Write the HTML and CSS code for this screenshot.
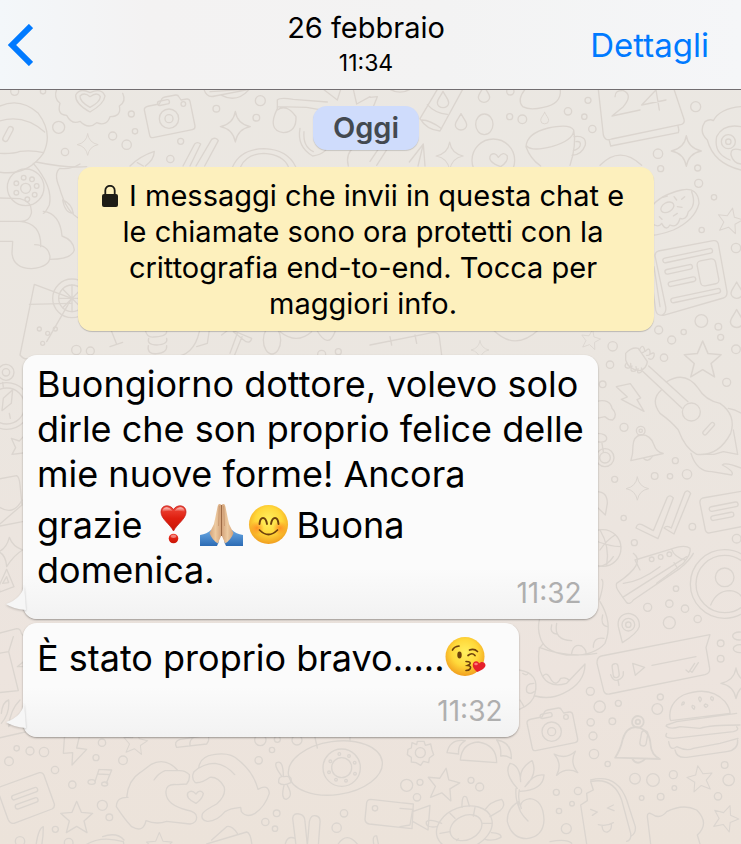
FILE: index.html
```html
<!DOCTYPE html>
<html lang="it">

<head>
    <meta charset="UTF-8">
    <meta name="viewport" content="width=device-width, initial-scale=1.0">
    <title>Chat del 26 febbraio</title>
    <link rel="stylesheet" href="styles.css">
</head>

<body>

    <!-- Sfondo con i disegni -->
    <svg class="wallpaper" viewBox="0 0 2223 2532" preserveAspectRatio="xMidYMin slice" aria-hidden="true">
        <defs>
            <path id="star" d="M0-48 L14-15 L48-12 L22 11 L31 46 L0 27 L-31 46 L-22 11 L-48-12 L-14-15Z" />
            <path id="sparkle" d="M0-46 Q6-8 45 0 Q7 7 0 46 Q-7 7-45 0 Q-6-8 0-46Z" />
            <path id="drop" d="M0-24 C8-8 17 0 17 10 A17 15 0 0 1-17 10 C-17 0-8-8 0-24Z" />
            <g id="camera">
                <path d="M-60-38 L-29-44 L-21-60 Q-18-64-12-65 L20-71 Q27-72 30-65 L36-56 L53-59 Q61-60 63-52 L78 22 Q79 31 70 33 L-48 57 Q-56 58-58 50 L-74-26 Q-75-35-60-38Z" />
                <circle r="29" />
                <circle r="12" />
                <circle cx="43" cy="-44" r="7" />
                <rect x="-25" y="-57" width="36" height="13" rx="6" transform="rotate(-11)" />
            </g>
            <g id="bell">
                <path d="M-39 40 Q-30 22-28-3 Q-24-32 0-34 Q28-32 35 0 Q39 22 60 29 Z" />
                <circle cy="-46" r="13" />
                <circle cy="-46" r="5" />
                <path d="M0 38 Q12 52 27 34" />
            </g>
        </defs>

        <!-- In alto a sinistra -->
        <g>
            <path d="M-4 320 Q60 290 115 340 Q160 400 130 460 Q80 530-4 516 M-4 364 Q70 340 134 396 M-4 460 Q40 462 60 454 Q100 450 130 458" />
            <rect x="-24" y="-8" width="48" height="16" rx="8" transform="translate(24 402) rotate(-62)" />
            <path d="M108 486 Q200 505 260 500 M100 490 Q160 560 148 615 Q135 640 130 640" />
            <circle cx="77" cy="562" r="55" />
            <circle cx="77" cy="565" r="15" />
            <circle cx="71" cy="533" r="7" /><circle cx="96" cy="538" r="7" /><circle cx="110" cy="558" r="7" />
            <circle cx="104" cy="584" r="7" /><circle cx="82" cy="598" r="7" /><circle cx="49" cy="578" r="7" /><circle cx="49" cy="550" r="7" />
            <path d="M-4 594 L60 596 Q98 605 94 640 Q88 665 60 664 L-4 664 M60 664 Q125 670 122 740 M-4 724 L38 724 L36 760 Q40 805 95 806 Q150 800 150 770 Q145 735 104 734 M130 634 Q180 640 186 708 Q220 720 223 750 Q215 778 150 778" />
            <path d="M178 562 Q160 520 180 505 Q210 510 240 492 M178 562 Q200 640 240 656 M188 600 Q215 610 220 640 Q195 640 188 600" />
            <path d="M170 268 Q160 295 180 310 Q170 345 200 346 Q215 375 240 364 Q265 390 290 368 Q320 380 330 350 Q365 350 358 318 Q380 305 368 280" />
            <path d="M270 336 Q225 312 227 285 Q240 262 270 278 Q305 262 315 288 Q312 312 270 336Z M270 322 Q238 304 240 288 Q252 275 270 290 Q292 274 301 290 Q300 306 270 322Z" />
            <use href="#camera" x="507" y="356" />
            <use href="#sparkle" x="706" y="380" />
            <use href="#sparkle" transform="translate(263 434) scale(.7)" />
            <path d="M549 498 L584 432 Q592 424 602 432 L570 498 M588 498 L635 418 Q648 410 655 422 L614 498" />
            <path d="M390 498 Q420 468 463 454 Q462 480 436 498 M412 488 L430 498" />
            <path d="M698 500 Q722 447 792 446 Q862 448 887 500 M722 500 Q740 462 792 460 Q850 464 865 500" />
            <path d="M612 268 Q620 295 645 288 L748 268 M630 275 L740 268 M665 286 Q710 310 748 268" />
            <path d="M832 300 Q840 292 880 298 L982 306 M832 320 L920 322 Q960 330 1000 334 M832 300 L832 326 Q800 390 850 398 Q890 395 888 350 Q860 310 832 330 M900 385 Q890 440 938 468 Q985 462 990 420 M912 395 Q908 440 940 455" />
            <path d="M970 268 L1012 300 L1022 268 M1060 268 L1070 312 L1110 290 M1045 498 Q1035 460 1065 440" />
            <circle cx="44" cy="274" r="12" /><circle cx="129" cy="274" r="8" /><circle cx="176" cy="382" r="18" />
            <circle cx="394" cy="342" r="9" /><circle cx="405" cy="394" r="8" /><circle cx="338" cy="408" r="12" />
            <circle cx="380" cy="434" r="14" /><circle cx="195" cy="456" r="11" /><circle cx="542" cy="424" r="9" />
            <circle cx="511" cy="477" r="11" /><circle cx="649" cy="326" r="10" /><circle cx="769" cy="353" r="10" /><circle cx="781" cy="302" r="15" />
        </g>

        <!-- In alto a destra -->
        <g transform="translate(1110 0)">
            <path d="M202 268 L150 356 Q170 390 210 393 L278 268 M172 314 Q195 340 232 343 M156 360 Q180 360 215 386" />
            <path d="M60 268 Q90 285 120 268 M0 345 L22 290 L0 292 M0 484 L30 440 M20 496 L56 440 M118 486 L160 432 L144 498 M160 432 L165 498" />
            <use href="#drop" x="219" y="298" />
            <use href="#drop" x="342" y="282" />
            <use href="#drop" x="273" y="365" />
            <use href="#drop" transform="translate(524 354) scale(.7)" />
            <use href="#sparkle" transform="translate(239 468) scale(.9)" />
            <use href="#sparkle" x="949" y="453" />
            <ellipse cx="343" cy="373" rx="26" ry="31" />
            <path d="M465 268 Q440 300 458 320 Q480 332 520 322 Q575 312 571 268" />
            <circle cx="370" cy="481" r="64" />
            <path d="M392 500 Q350 485 362 465 Q375 455 385 472 Q400 452 412 468 Q415 485 392 500Z" />
            <path d="M468 440 Q470 400 535 384 Q600 370 611 390 Q620 435 600 496 M468 440 Q480 475 512 498 M470 438 Q485 455 545 440 Q610 420 611 392 M612 410 Q650 405 646 435 Q635 465 606 466 M618 425 Q635 422 630 438 Q625 448 610 452" />
            <path d="M685 268 L700 405 Q705 425 725 417 L935 373 Q945 368 942 358 L912 268 M718 422 L722 438 L925 398 Q928 390 924 378" />
            <path d="M735 290 Q735 270 760 272 Q790 285 760 320 L726 348 L810 330 M860 268 L815 315 L888 300 M858 270 L868 330" />
            <path d="M1012 420 Q985 395 1005 365 Q1020 355 1030 362 Q1050 325 1113 320 M1012 420 Q1030 490 1113 510 M1113 380 Q1060 370 1040 410 Q1030 460 1080 480 M1113 450 Q1080 440 1083 465 Q1090 490 1113 492" />
            <circle cx="1075" cy="425" r="21" /><circle cx="1075" cy="425" r="8" />
            <path d="M690 496 Q750 435 815 496" />
            <circle cx="419" cy="350" r="9" /><circle cx="457" cy="358" r="13" /><circle cx="594" cy="334" r="11" />
            <circle cx="654" cy="301" r="9" /><circle cx="643" cy="350" r="8" /><circle cx="667" cy="387" r="11" />
            <circle cx="421" cy="274" r="11" /><circle cx="977" cy="320" r="15" /><circle cx="864" cy="461" r="14" />
            <circle cx="872" cy="506" r="9" /><circle cx="983" cy="504" r="9" />
        </g>

        <!-- Colonna destra -->
        <g transform="translate(1770 510)">
            <path d="M185 110 Q210 75 275 60 Q325 50 327 100 Q315 150 250 180 Q210 195 185 196 M185 160 Q205 175 215 160 Q228 185 240 165 Q262 175 270 145 Q290 152 295 125 Q320 105 305 65" />
            <ellipse cx="232" cy="112" rx="21" ry="14" transform="rotate(-30 232 112)" />
            <path d="M218 82 L232 78 M252 80 L260 90 M275 88 L284 80 M262 110 L276 112 M250 138 L262 130 M208 140 L216 148" />
            <path d="M370 212 Q382 210 385 222 L411 365 Q412 380 400 384 L220 436 Q200 438 197 420 L180 290 M370 212 L205 243 Q192 248 196 262 L227 410 Q230 430 215 436 M192 290 L210 410" />
            <rect x="-76" y="-7" width="152" height="14" rx="7" transform="translate(293 257) rotate(-12)" />
            <rect x="-42" y="-7" width="84" height="14" rx="7" transform="translate(266 298) rotate(-12)" />
            <rect x="-42" y="-7" width="84" height="14" rx="7" transform="translate(276 335) rotate(-12)" />
            <rect x="-76" y="-7" width="152" height="14" rx="7" transform="translate(317 377) rotate(-12)" />
            <rect x="-28" y="-38" width="56" height="76" rx="12" transform="translate(354 307) rotate(-11)" />
            <use href="#star" transform="translate(420 151) scale(.78) rotate(12)" />
            <use href="#star" transform="translate(338 568) scale(1.15)" />
            <use href="#star" transform="translate(2 508) scale(.6) rotate(12)" />
            <use href="#drop" x="440" y="360" />
            <use href="#drop" transform="translate(440 445) scale(1.1)" />
            <!-- chitarra -->
            <path d="M107 550 Q125 530 145 535 L172 575 Q170 595 150 602 Q115 600 107 570Z M158 604 L276 715 M176 588 L294 695" />
            <path d="M229 636 Q285 600 325 655 Q345 690 390 700 Q440 735 422 790 Q385 860 320 853 Q285 835 265 780 Q245 755 210 730 Q180 690 214 660" />
            <circle cx="304" cy="726" r="27" />
            <rect x="-23" y="-6" width="46" height="12" rx="6" transform="translate(356 776) rotate(-48)" />
            <path d="M148 540 q8-18 14-6 t-6 14 m10-4 q12-14 14 0 t-10 12 m12-4 q14-8 10 6 t-16 8 M110 578 q-10 14 2 16 t10-14 m4 8 q-8 16 4 16 t8-14 m6 6 q-4 16 6 12 t4-14" />
            <path d="M79 650 L121 641 L152 684 L141 689 L162 724 L94 688 L112 681Z" />
            <use href="#bell" transform="translate(157 828) rotate(-6)" />
            <path d="M415 715 Q435 718 455 730 M430 780 L443 853 L400 845 L372 853 L320 853 M303 850 Q320 905 365 905 L425 915 Q435 905 397 885 Q405 875 455 895" />
            <use href="#sparkle" transform="translate(142 956) scale(.75)" />
            <path d="M138 1074 Q142 1058 156 1064 L190 1082 L232 982 Q240 972 250 984 L204 1106Z M222 1074 Q230 1064 244 1074 L284 968 Q292 956 302 970 L252 1092Z" />
            <path d="M455 964 L338 984 Q328 988 330 1000 L346 1080 Q350 1092 362 1088 L455 1070" />
            <rect x="-44" y="-7" width="88" height="14" rx="7" transform="translate(401 1010) rotate(-11)" />
            <rect x="-35" y="-7" width="70" height="14" rx="7" transform="translate(397 1039) rotate(-11)" />
            <path d="M20 694 Q60 685 66 715 Q85 735 68 750 Q55 750 45 740 L20 745 M20 790 Q52 790 50 808 Q45 820 20 815 M36 820 L40 845" />
            <circle cx="45" cy="863" r="27" /><circle cx="45" cy="863" r="16" />
            <path d="M20 965 Q52 965 52 1000 L46 1035 L20 1010" />
            <circle cx="38" cy="1134" r="55" />
            <path d="M30 1080 Q60 1130 50 1185 M10 1110 Q60 1130 92 1130 M30 1140 Q50 1110 75 1095" />
            <circle cx="404" cy="1242" r="103" /><circle cx="404" cy="1242" r="86" /><circle cx="404" cy="1222" r="28" />
            <path d="M362 1305 Q380 1262 420 1262 Q450 1264 460 1290" />
            <path d="M135 1170 L240 1138 Q285 1122 300 1135 Q305 1150 280 1180 L200 1240 M135 1170 L150 1200 M245 1138 Q252 1160 285 1170" />
            <circle cx="185" cy="1168" r="7" /><circle cx="212" cy="1161" r="7" /><circle cx="238" cy="1153" r="7" />
            <circle cx="326" cy="40" r="12" /><circle cx="372" cy="82" r="8" /><circle cx="335" cy="180" r="8" />
            <circle cx="438" cy="234" r="14" /><circle cx="334" cy="453" r="19" /><circle cx="385" cy="470" r="10" />
            <circle cx="281" cy="486" r="8" /><circle cx="245" cy="510" r="12" /><circle cx="206" cy="480" r="12" />
            <circle cx="392" cy="502" r="9" /><circle cx="438" cy="538" r="13" /><circle cx="222" cy="563" r="11" />
            <circle cx="68" cy="529" r="14" /><circle cx="60" cy="584" r="11" /><circle cx="38" cy="643" r="10" />
            <circle cx="410" cy="637" r="12" /><circle cx="102" cy="772" r="12" /><circle cx="256" cy="872" r="9" />
            <circle cx="291" cy="913" r="14" /><circle cx="240" cy="919" r="8" /><circle cx="194" cy="918" r="10" />
            <circle cx="74" cy="928" r="9" /><circle cx="101" cy="1044" r="8" /><circle cx="307" cy="1070" r="10" />
            <circle cx="440" cy="1106" r="13" /><circle cx="133" cy="1118" r="9" />
        </g>

        <!-- Tra avviso e primo messaggio -->
        <g transform="translate(0 975)">
            <path d="M60 90 L103-122 L215-80 L140 50 M88-62 L215-65 M60 90 Q75 110 100 96" />
            <circle cx="216" cy="-80" r="58" /><circle cx="216" cy="-80" r="40" />
            <path d="M216-120 V-40 M176-80 H256 M188-108 L244-52 M244-108 L188-52" />
            <circle cx="118" cy="12" r="6" /><circle cx="143" cy="25" r="6" /><circle cx="166" cy="12" r="6" /><circle cx="128" cy="55" r="6" />
            <circle cx="229" cy="75" r="14" /><circle cx="271" cy="78" r="12" />
            <path d="M332 12 L350 58 M330 65 L368 52 M436 15 Q440 38 460 36 Q500 34 500 20 M446 40 Q440 60 470 60 Q505 58 500 40 M445 62 Q440 88 470 86 Q502 84 500 62 M510 95 Q580 100 598 20 M590 65 L622 55 L628 15" />
            <path d="M665 30 L688 12 L755 40 Q752 55 738 50 L700 20 M690 85 L712 25 M704 90 L726 35" />
            <ellipse cx="816" cy="45" rx="26" ry="42" />
            <path d="M840 20 Q890 60 935 20 M950 15 Q985 75 1005 20" />
            <circle cx="965" cy="88" r="12" /><circle cx="1015" cy="80" r="9" />
            <path d="M1110 60 L1300 22 Q1316 22 1318 36 L1325 90 M1170 35 L1175 60 M1245 30 L1250 55 M1480 15 Q1545 80 1615 15" />
            <use href="#sparkle" transform="translate(1440 75) scale(.6)" />
            <!-- bussola -->
            <circle cx="20" cy="243" r="54" /><circle cx="20" cy="243" r="70" /><circle cx="18" cy="142" r="24" /><circle cx="18" cy="142" r="11" />
            <path d="M38 194 L34 235 L6 257 L10 220Z M8 172 L10 186 M28 265 L31 280" />
            <path d="M70 335 L58 348 L34 340 L47 368 L36 388 L70 384 M-4 462 L50 452 Q58 456 60 480 L66 540 L-4 600" />
        </g>

        <!-- Colonna sinistra in basso -->
        <g transform="translate(0 1440)">
            <path d="M-4 80 Q40 110 66 60 M0 138 L68 125 M28 172 Q38 200 68 210 Q42 225 20 260 Q18 225 -4 215 Q20 205 28 172Z M-4 320 L20 268 L42 320 L0 336Z M8 310 L20 290 L26 308Z" />
            <path d="M-4 460 L50 446 Q62 446 64 460 L80 480 M-4 520 L26 515 L55 632 L-4 638 M26 515 L40 470 M52 560 L70 545 L70 560Z M4 700 Q8 665 26 660 Q30 700 4 730 M60 660 Q30 690 26 740 L60 700" />
        </g>

        <!-- In basso a sinistra -->
        <g transform="translate(0 2190)">
            <path d="M-4 24 L76 6 M195 0 L190 70 L218 68 L216 105 L260 58 L230 54 L238 20" />
            <path d="M-4 172 L118 128 Q128 126 132 136 L163 222 Q165 232 156 237 L42 280 Q30 282 24 268 L-4 190" />
            <rect x="-41" y="-7" width="82" height="14" rx="7" transform="translate(74 191) rotate(-20)" />
            <rect x="-36" y="-7" width="72" height="14" rx="7" transform="translate(80 220) rotate(-20)" />
            <path d="M297 118 L335 120 L319 160 M297 118 L285 155 M294 132 L330 134" />
            <ellipse cx="275" cy="156" rx="11" ry="7" /><ellipse cx="314" cy="162" rx="9" ry="6" />
            <use href="#star" transform="translate(230 262)" />
            <use href="#star" transform="translate(406 36) scale(.75) rotate(8)" />
            <use href="#star" transform="translate(478 346) scale(.8)" />
            <path d="M530 52 L620 42 Q630 30 624 16 M530 52 Q520 35 540 28 L624 16 M570 46 Q568 30 580 24" />
            <!-- mani a cuore -->
            <path d="M384 202 Q350 200 349 230 Q375 270 395 290 Q430 310 438 272 Q470 285 500 274 L570 282 Q590 280 590 262 Q590 245 560 240 Q500 225 498 190 Q495 160 530 164 L560 162 Q570 150 568 134 Q555 120 535 122 L495 122 Q475 130 462 150 M380 202 Q385 150 420 128 L452 104 Q495 80 532 120" />
            <path d="M596 114 Q600 80 640 74 Q690 65 715 90 Q760 125 774 178 Q805 160 808 190 Q795 230 765 250 Q740 265 724 245 L722 232 Q690 235 675 245 Q650 275 622 274 Q600 270 608 250 Q615 240 650 222 Q680 195 672 170 Q655 140 630 142 Q605 160 586 158 Q572 145 582 125 Q610 100 645 100 Q680 105 704 134" />
            <path d="M588 220 Q555 205 564 188 Q575 178 588 192 Q600 176 610 190 Q608 206 588 220Z" />
            <ellipse cx="1006" cy="114" rx="142" ry="80" transform="rotate(-8 1006 114)" />
            <circle cx="1025" cy="113" r="56" /><circle cx="1025" cy="113" r="30" />
            <circle cx="1018" cy="72" r="4" /><circle cx="1047" cy="78" r="4" /><circle cx="1064" cy="98" r="4" /><circle cx="1065" cy="131" r="4" />
            <circle cx="1038" cy="152" r="4" /><circle cx="1008" cy="149" r="4" /><circle cx="987" cy="127" r="4" /><circle cx="991" cy="94" r="4" />
            <path d="M846 140 Q820 105 830 98 Q850 88 850 140 Q880 135 872 158 Q850 170 836 158 Q835 140 846 140 M852 166 Q842 205 858 208 Q882 200 862 166" />
            <path d="M255 346 Q300 315 370 335 L372 346 M308 320 Q350 305 372 330 M620 342 L740 306 Q752 308 756 346 M635 330 L680 290 Q695 285 712 310 M108 346 Q115 295 130 290 Q130 320 125 346" />
            <path d="M888 346 L878 265 Q880 248 898 252 Q915 255 915 275 L922 346 L928 275 Q932 252 950 258 Q962 262 960 278 L955 346 M855 346 Q860 315 885 325 M1012 346 Q1040 300 1075 346 M1122 346 Q1115 315 1130 318 L1136 346" />
            <path d="M1200 218 L1112 208 Q1102 208 1100 218 L1095 268 Q1096 280 1108 282 L1200 292 M1200 218 L1240 222 L1236 296 L1200 292 M1240 244 L1290 226 L1284 300 L1238 274" />
            <circle cx="1125" cy="235" r="8" />
            <path d="M940 0 L952 54 M1050 0 V34" />
            <circle cx="27" cy="94" r="13" /><circle cx="50" cy="55" r="8" /><circle cx="90" cy="63" r="12" /><circle cx="132" cy="66" r="14" />
            <circle cx="165" cy="120" r="11" /><circle cx="217" cy="164" r="11" /><circle cx="306" cy="38" r="11" /><circle cx="288" cy="83" r="9" />
            <circle cx="369" cy="91" r="13" /><circle cx="307" cy="226" r="15" /><circle cx="328" cy="262" r="10" /><circle cx="166" cy="298" r="9" />
            <circle cx="60" cy="334" r="14" /><circle cx="206" cy="338" r="13" /><circle cx="776" cy="91" r="11" /><circle cx="816" cy="60" r="8" />
            <circle cx="781" cy="30" r="17" /><circle cx="891" cy="30" r="15" /><circle cx="832" cy="28" r="9" /><circle cx="830" cy="250" r="10" />
            <circle cx="796" cy="276" r="11" /><circle cx="825" cy="296" r="8" /><circle cx="1032" cy="250" r="11" /><circle cx="1010" cy="293" r="14" />
        </g>

        <!-- In basso a destra -->
        <g transform="translate(1200 1680)">
            <path d="M597 20 Q625 15 640 -10 M700 -20 Q740 10 650 70 Q645 80 660 100 L680 128 Q690 135 700 120 L840 25 Q870 0 880 -20 M668 112 L860 -10 M670 70 Q720 65 780 20 M822 8 L832 24" />
            <path d="M605 58 Q615 65 598 120 M600 125 Q640 190 615 250 Q580 290 500 285 Q430 275 420 230 Q412 205 418 180 M455 195 Q448 220 470 222 M470 190 Q460 240 515 242 M418 262 Q500 295 590 280 M418 262 Q410 320 428 350 Q450 385 500 370 L555 312 Q555 370 490 400 Q450 420 405 408 M430 250 L418 265 M428 350 Q440 330 455 362 Q470 380 482 355 Q500 350 508 362 M515 280 Q520 250 545 258 Q560 270 558 282 M580 262 Q580 230 612 235 M622 200 Q600 195 608 165 M358 330 Q420 340 405 400 Q400 430 358 448 M368 340 Q380 350 385 338 M402 370 Q375 370 380 395 Q390 405 402 395 M360 420 L372 440" />
            <path d="M667 248 L655 200 Q650 165 685 160 Q720 165 718 200 Q712 220 667 248Z" />
            <circle cx="685" cy="194" r="19" /><circle cx="685" cy="194" r="8" />
            <!-- messaggio vocale -->
            <path d="M604 288 L930 224 L918 262 L929 325 Q930 340 915 344 L628 402 Q615 404 611 392 L591 310 Q590 292 604 288Z" />
            <path d="M698 310 L734 322 L706 346Z M756 316 L888 290 M858 330 L866 337 L884 310 M870 332 L876 337 L895 308 M632 344 Q640 365 654 360 Q672 355 670 335 M654 361 L657 376" />
            <rect x="638" y="311" width="18" height="42" rx="9" transform="rotate(-8 647 332)" />
            <use href="#camera" x="455" y="515" />
            <use href="#bell" transform="translate(705 547) rotate(8) scale(1.35)" />
            <rect x="722" y="512" width="19" height="46" rx="9" transform="rotate(10 731 535)" />
            <!-- hamburger -->
            <path d="M810 475 Q805 430 850 405 Q930 375 975 425 Q990 445 990 460 L812 482Z M800 495 L830 485 L1010 460 M798 498 Q810 510 840 500 L900 505 Q930 495 1020 495 M800 520 Q790 535 820 535 L1000 515 Q1020 510 1010 500 M806 545 Q810 575 830 560 Q860 575 880 565 L960 550 L1014 535 M825 570 Q830 595 860 592 L980 575 Q1015 570 1013 540" />
            <path d="M845 435 q2-12 8-8 q0 8-8 8 M900 425 q-8-12 0-14 q8 6 0 14 M938 422 q-10-6-4-12 q10 2 4 12 M882 448 q-10-8-4-12 q10 2 4 12 M918 442 q-10-6-2-10 q14 4 2 10" />
            <use href="#sparkle" transform="translate(1008 370)" />
            <use href="#sparkle" transform="translate(498 610) rotate(38)" />
            <ellipse cx="1018" cy="228" rx="20" ry="12" /><ellipse cx="1020" cy="266" rx="20" ry="12" />
            <!-- ingranaggio -->
            <circle cx="61" cy="578" r="15" />
            <path d="M52 544 L72 544 L76 556 L92 552 L96 570 L101 584 L88 594 L86 608 L70 604 L62 616 L48 608 L34 606 L34 592 L22 584 L24 568 L34 564 L36 548 L50 554Z" />
            <path d="M181 600 Q185 550 235 546 Q290 555 290 608Z M141 578 Q150 535 196 542 Q172 555 176 582Z M290 540 Q335 545 334 596 Q320 585 302 588 Q305 560 290 540" />
            <use href="#star" transform="translate(130 672) rotate(10)" />
            <use href="#star" transform="translate(900 655) scale(.8) rotate(-10)" />
            <use href="#star" transform="translate(977 773) scale(.8) rotate(20)" />
            <!-- tartaruga -->
            <ellipse cx="193" cy="803" rx="86" ry="62" transform="rotate(-20 193 803)" />
            <ellipse cx="198" cy="803" rx="50" ry="36" transform="rotate(-25 198 803)" />
            <path d="M256 748 Q270 725 305 718 Q320 735 300 752 L270 770 M112 800 Q75 805 79 785 Q90 775 125 790 M186 742 Q185 700 200 712 L208 738 M274 818 Q305 820 303 832 Q280 845 255 838 M150 760 L165 775 M225 742 L220 768 M275 790 L248 790 M120 820 L150 815 M170 842 L175 836" />
            <path d="M352 685 Q310 640 330 610 Q360 615 362 665 Q355 625 396 602 Q415 640 375 680 Q400 640 432 645 Q430 690 360 694 M348 686 Q345 720 360 748 M358 690 Q352 720 364 745 M384 783 Q350 750 356 725 Q320 745 322 785 Q335 835 380 836 Q430 830 432 780 Q430 720 390 716 Q365 720 362 735" />
            <!-- gelato -->
            <path d="M560 852 L542 735 L562 722 L560 700 L580 690 L572 665 Q640 650 665 720 L692 820 Q695 840 680 844 M572 660 Q650 640 680 720 L706 800 Q708 820 694 828 M572 748 L592 756 L577 766 M640 735 L622 744 L642 752 M595 794 Q620 800 640 788 M606 798 Q608 818 622 816 Q636 812 634 792" />
            <path d="M752 852 L742 770 Q742 755 755 762 Q780 780 800 755 Q850 730 890 750 Q930 790 892 825 L900 852 M450 845 Q500 835 515 850 M0 745 L38 748 L30 795 L0 800" />
            <circle cx="828" cy="86" r="8" /><circle cx="743" cy="142" r="12" /><circle cx="808" cy="131" r="11" /><circle cx="855" cy="146" r="11" />
            <circle cx="808" cy="188" r="18" /><circle cx="893" cy="177" r="11" /><circle cx="962" cy="250" r="10" /><circle cx="962" cy="296" r="10" />
            <circle cx="571" cy="394" r="12" /><circle cx="599" cy="440" r="17" /><circle cx="655" cy="430" r="9" /><circle cx="781" cy="411" r="9" />
            <circle cx="772" cy="447" r="16" /><circle cx="572" cy="487" r="11" /><circle cx="637" cy="484" r="10" /><circle cx="579" cy="528" r="12" />
            <circle cx="582" cy="582" r="14" /><circle cx="623" cy="612" r="8" /><circle cx="974" cy="615" r="10" /><circle cx="705" cy="656" r="16" />
            <circle cx="759" cy="660" r="19" /><circle cx="820" cy="644" r="12" /><circle cx="823" cy="684" r="7" /><circle cx="782" cy="710" r="10" />
            <circle cx="725" cy="714" r="7" /><circle cx="986" cy="660" r="17" /><circle cx="954" cy="709" r="11" /><circle cx="20" cy="676" r="18" />
            <circle cx="60" cy="667" r="9" /><circle cx="51" cy="712" r="11" /><circle cx="213" cy="661" r="9" /><circle cx="239" cy="681" r="12" />
            <circle cx="469" cy="697" r="9" /><circle cx="534" cy="693" r="11" /><circle cx="516" cy="731" r="7" /><circle cx="477" cy="753" r="8" /><circle cx="499" cy="806" r="15" />
        </g>
    </svg>

    <header class="top-bar">
        <button type="button" class="back-btn" aria-label="Indietro">
            <svg width="26" height="42" viewBox="0 0 26 42" aria-hidden="true">
                <path d="M24 2 L5 21 L24 40" fill="none" stroke="#007aff" stroke-width="6" />
            </svg>
        </button>
        <div class="top-title">
            <h1>26 febbraio</h1>
            <time datetime="11:34">11:34</time>
        </div>
        <a href="#dettagli" class="details-link">Dettagli</a>
    </header>

    <main class="chat">
        <div class="day-label">Oggi</div>

        <p class="notice">
            <svg class="lock-icon" width="16" height="22" viewBox="0 0 16 22" aria-hidden="true">
                <path d="M3.300 10 V5.500 A4.700 4.700 0 0 1 12.700 5.500 V10" fill="none" stroke="#1d1c16" stroke-width="1.800" />
                <rect y="9" width="16" height="13" rx="2" fill="#1d1c16" />
            </svg>
            I messaggi che invii in questa chat e le chiamate sono ora protetti con la crittografia end-to-end. Tocca per maggiori info.
        </p>

        <!-- Primo messaggio -->
        <article class="bubble">
            <svg class="bubble-tail" width="20" height="26" viewBox="0 0 20 26" aria-hidden="true">
                <path d="M18 0 Q17 14 0 20 Q7 25 20 26Z" fill="#f6f6f6" />
            </svg>
            <p class="message-text">Buongiorno dottore, volevo solo<br>
                dirle che son proprio felice delle<br>
                mie nuove forme! Ancora<br>
                grazie <svg class="emoji" viewBox="4 0 48 49" role="img" aria-label="cuore esclamativo">
                    <defs>
                        <linearGradient id="redHeart" x1="0" y1="0" x2="0" y2="1">
                            <stop offset="0" stop-color="#f04a3c" />
                            <stop offset=".5" stop-color="#df1f10" />
                            <stop offset="1" stop-color="#c81505" />
                        </linearGradient>
                        <linearGradient id="shine" x1="0" y1="0" x2="0" y2="1">
                            <stop offset="0" stop-color="#fff" stop-opacity=".7" />
                            <stop offset="1" stop-color="#fff" stop-opacity="0" />
                        </linearGradient>
                    </defs>
                    <path d="M24.500 34 C21 27 12 22 12 15 C12 7.500 21 7 24.500 12.500 C28 7 37 7.500 37 15 C37 22 28 27 24.500 34Z" fill="url(#redHeart)" stroke="#c4201a" stroke-width=".8" />
                    <path d="M13.500 15 C13 9.500 20 8.500 23.500 14 Q18 13 13.500 15Z M35.500 15 C36 9.500 29 8.500 25.500 14 Q31 13 35.500 15Z" fill="url(#shine)" />
                    <circle cx="24.500" cy="41.500" r="4.800" fill="url(#redHeart)" />
                    <ellipse cx="24.500" cy="39.300" rx="2.800" ry="1.600" fill="#fff" opacity=".4" />
                </svg><svg class="emoji" viewBox="4 0 48 49" role="img" aria-label="mani giunte">
                    <defs>
                        <linearGradient id="sleeve" x1="0" y1="0" x2="0" y2="1">
                            <stop offset="0" stop-color="#68a8e4" />
                            <stop offset="1" stop-color="#2c6bb4" />
                        </linearGradient>
                        <linearGradient id="skin" x1="0" y1="0" x2="1" y2="0">
                            <stop offset="0" stop-color="#d3a279" />
                            <stop offset=".5" stop-color="#edcaa0" />
                            <stop offset="1" stop-color="#d3a279" />
                        </linearGradient>
                    </defs>
                    <path d="M3 38 Q10 37 14 33 L24.500 49 H3Z M46 38 Q39 37 35 33 L24.500 49 H46Z" fill="url(#sleeve)" />
                    <path d="M24.500 8 Q21 5.500 20.500 10 L17 27 L12.500 36 Q15 43 21 46.500 L24.500 38Z" fill="url(#skin)" />
                    <path d="M24.500 8 Q28 5.500 28.500 10 L32 27 L36.500 36 Q34 43 28 46.500 L24.500 38Z" fill="url(#skin)" />
                    <path d="M24.500 8 V39" fill="none" stroke="#9c6a45" stroke-width="1" />
                    <path d="M22.300 9 L21.500 29 M26.700 9 L27.500 29" stroke="#c39169" stroke-width=".7" />
                    <path d="M24.500 39 L20 49 H29Z" fill="#fbfbfb" />
                </svg><svg class="emoji" viewBox="8 0 48 49" role="img" aria-label="faccina sorridente">
                    <defs>
                        <radialGradient id="face" cx=".5" cy=".4" r=".62">
                            <stop offset="0" stop-color="#fff060" />
                            <stop offset=".55" stop-color="#ffd83a" />
                            <stop offset="1" stop-color="#f09a1c" />
                        </radialGradient>
                        <radialGradient id="blush">
                            <stop offset="0" stop-color="#ff7a1c" stop-opacity=".75" />
                            <stop offset="1" stop-color="#ff7a1c" stop-opacity="0" />
                        </radialGradient>
                    </defs>
                    <circle cx="27.500" cy="27.500" r="19.500" fill="url(#face)" />
                    <circle cx="16" cy="31" r="7" fill="url(#blush)" />
                    <circle cx="39" cy="31" r="7" fill="url(#blush)" />
                    <path d="M18.500 27 Q19 21 22 21 Q25 21 26 27 M30 27 Q31 21 34 21 Q37 21 37.500 27" fill="none" stroke="#6d400c" stroke-width="1.900" stroke-linecap="round" />
                    <path d="M18.500 33 Q27.500 42 36.500 33" fill="none" stroke="#6d400c" stroke-width="1.700" stroke-linecap="round" />
                </svg>Buona<br>
                domenica.</p>
            <time class="bubble-time bubble-time-inline" datetime="11:32">11:32</time>
        </article>

        <!-- Secondo messaggio -->
        <article class="bubble">
            <svg class="bubble-tail" width="20" height="26" viewBox="0 0 20 26" aria-hidden="true">
                <path d="M18 0 Q17 14 0 20 Q7 25 20 26Z" fill="#f6f6f6" />
            </svg>
            <p class="message-text message-short">È stato proprio bravo.....<svg class="emoji" viewBox="2 0 48 49" role="img" aria-label="faccina che manda un bacio">
                    <circle cx="22" cy="26.500" r="19.500" fill="url(#face)" />
                    <ellipse cx="16.500" cy="25" rx="2.200" ry="3.400" fill="#6d400c" />
                    <path d="M9.500 20 Q11 16.500 16 16 M25 25.500 Q29 22 32 25.500 M26.500 20 Q31 18 34.500 21.500" fill="none" stroke="#6d400c" stroke-width="1.700" stroke-linecap="round" />
                    <path d="M23 31.500 Q29 31.500 26.500 34.500 L24.500 35.500 Q29 36 27 39 Q26 40.500 23 40.500" fill="none" stroke="#6d400c" stroke-width="1.600" stroke-linecap="round" />
                    <path d="M34 42 C31 39 28 35.500 31 32 C33 30.500 35.500 31.500 36 33.500 C38 31 42 31.500 42.500 35 C42.500 38.500 38 40.500 34 42Z" fill="#e5202b" />
                    <ellipse cx="33" cy="34" rx="1.800" ry="1.200" fill="#ff7a7a" />
                </svg></p>
            <time class="bubble-time" datetime="11:32">11:32</time>
        </article>
    </main>

</body>
</html>
```
FILE: styles.css
```css
* {
    box-sizing: border-box;
}

body {
    position: relative;
    font-family: Inter, "Noto Sans", sans-serif;
    margin: 0;
    min-height: 100vh;
    color: #000;
    background: linear-gradient(#ebe8e3, #ebe6e0 45%, #ede4de 80%, #ece3da);
    overflow-x: hidden;
}

h1,
p {
    margin: 0;
}

.wallpaper {
    position: absolute;
    inset: 0;
    z-index: -1;
    width: 100%;
    height: 100%;
    fill: none;
    stroke: #dbd5cf;
    stroke-width: 4;
    stroke-linejoin: round;
    stroke-linecap: round;
}

/* Barra in alto */
.top-bar {
    display: grid;
    grid-template-columns: 1fr auto 1fr;
    align-items: center;
    height: 90px;
    padding: 0 32px 0 23px;
    background: linear-gradient(90deg, #f3f7fa, #f3f2f2 20%, #f3f3f3 60%, #f5f6f8);
    border-bottom: 1px solid #716d70;
}

.back-btn {
    justify-self: start;
    display: flex;
    margin-left: -16px;
    padding: 0;
    border: none;
    background: none;
    cursor: pointer;
}

.top-title {
    display: flex;
    flex-direction: column;
    align-items: center;
}

.top-title h1 {
    font-size: 29px;
    font-weight: 400;
    line-height: 36px;
}

.top-title time {
    font-size: 23px;
    line-height: 34px;
}

.details-link {
    justify-self: end;
    font-size: 33px;
    color: #007aff;
    text-decoration: none;
}

/* Messaggi */
.chat {
    display: flex;
    flex-direction: column;
    align-items: flex-start;
    padding: 16px 32px 24px 23px;
}

.day-label {
    align-self: center;
    padding: 0 20px;
    border-radius: 14px;
    background-color: #cfdcfc;
    color: #434950;
    font-size: 29px;
    font-weight: 600;
    line-height: 44px;
    box-shadow: 0 1px 1px rgba(0, 0, 0, 0.15);
}

.notice {
    align-self: center;
    max-width: 576px;
    margin: 17px 0 24px;
    padding: 11px 27px 9px 21px;
    border-radius: 14px;
    background-color: #fdf0bd;
    font-size: 29px;
    line-height: 36px;
    text-align: center;
    box-shadow: 0 1px 1px rgba(0, 0, 0, 0.2);
}

.lock-icon {
    margin-right: 3px;
    vertical-align: -1px;
}

.bubble {
    position: relative;
    display: flex;
    flex-direction: column;
    width: fit-content;
    max-width: 576px;
    margin-bottom: 4px;
    padding: 7px 14px 10px;
    border-radius: 14px;
    background: linear-gradient(#fbfbfb calc(100% - 50px), #f2f2f2);
    box-shadow: 0 1px 2px rgba(0, 0, 0, 0.35);
}

.bubble-tail {
    position: absolute;
    left: -17px;
    bottom: 9px;
    filter: drop-shadow(0 1px 1px rgba(0, 0, 0, 0.2));
}

.message-text {
    font-size: 36px;
    line-height: 45px;
}

.message-short {
    padding-right: 12px;
}

.emoji {
    width: 48px;
    height: 49px;
    vertical-align: -8px;
    overflow: visible;
}

.bubble-time {
    align-self: flex-end;
    margin-top: 14px;
    padding-right: 2px;
    color: #afafaf;
    font-size: 28px;
    line-height: 32px;
}

.bubble-time-inline {
    margin-top: -16px;
}
```
